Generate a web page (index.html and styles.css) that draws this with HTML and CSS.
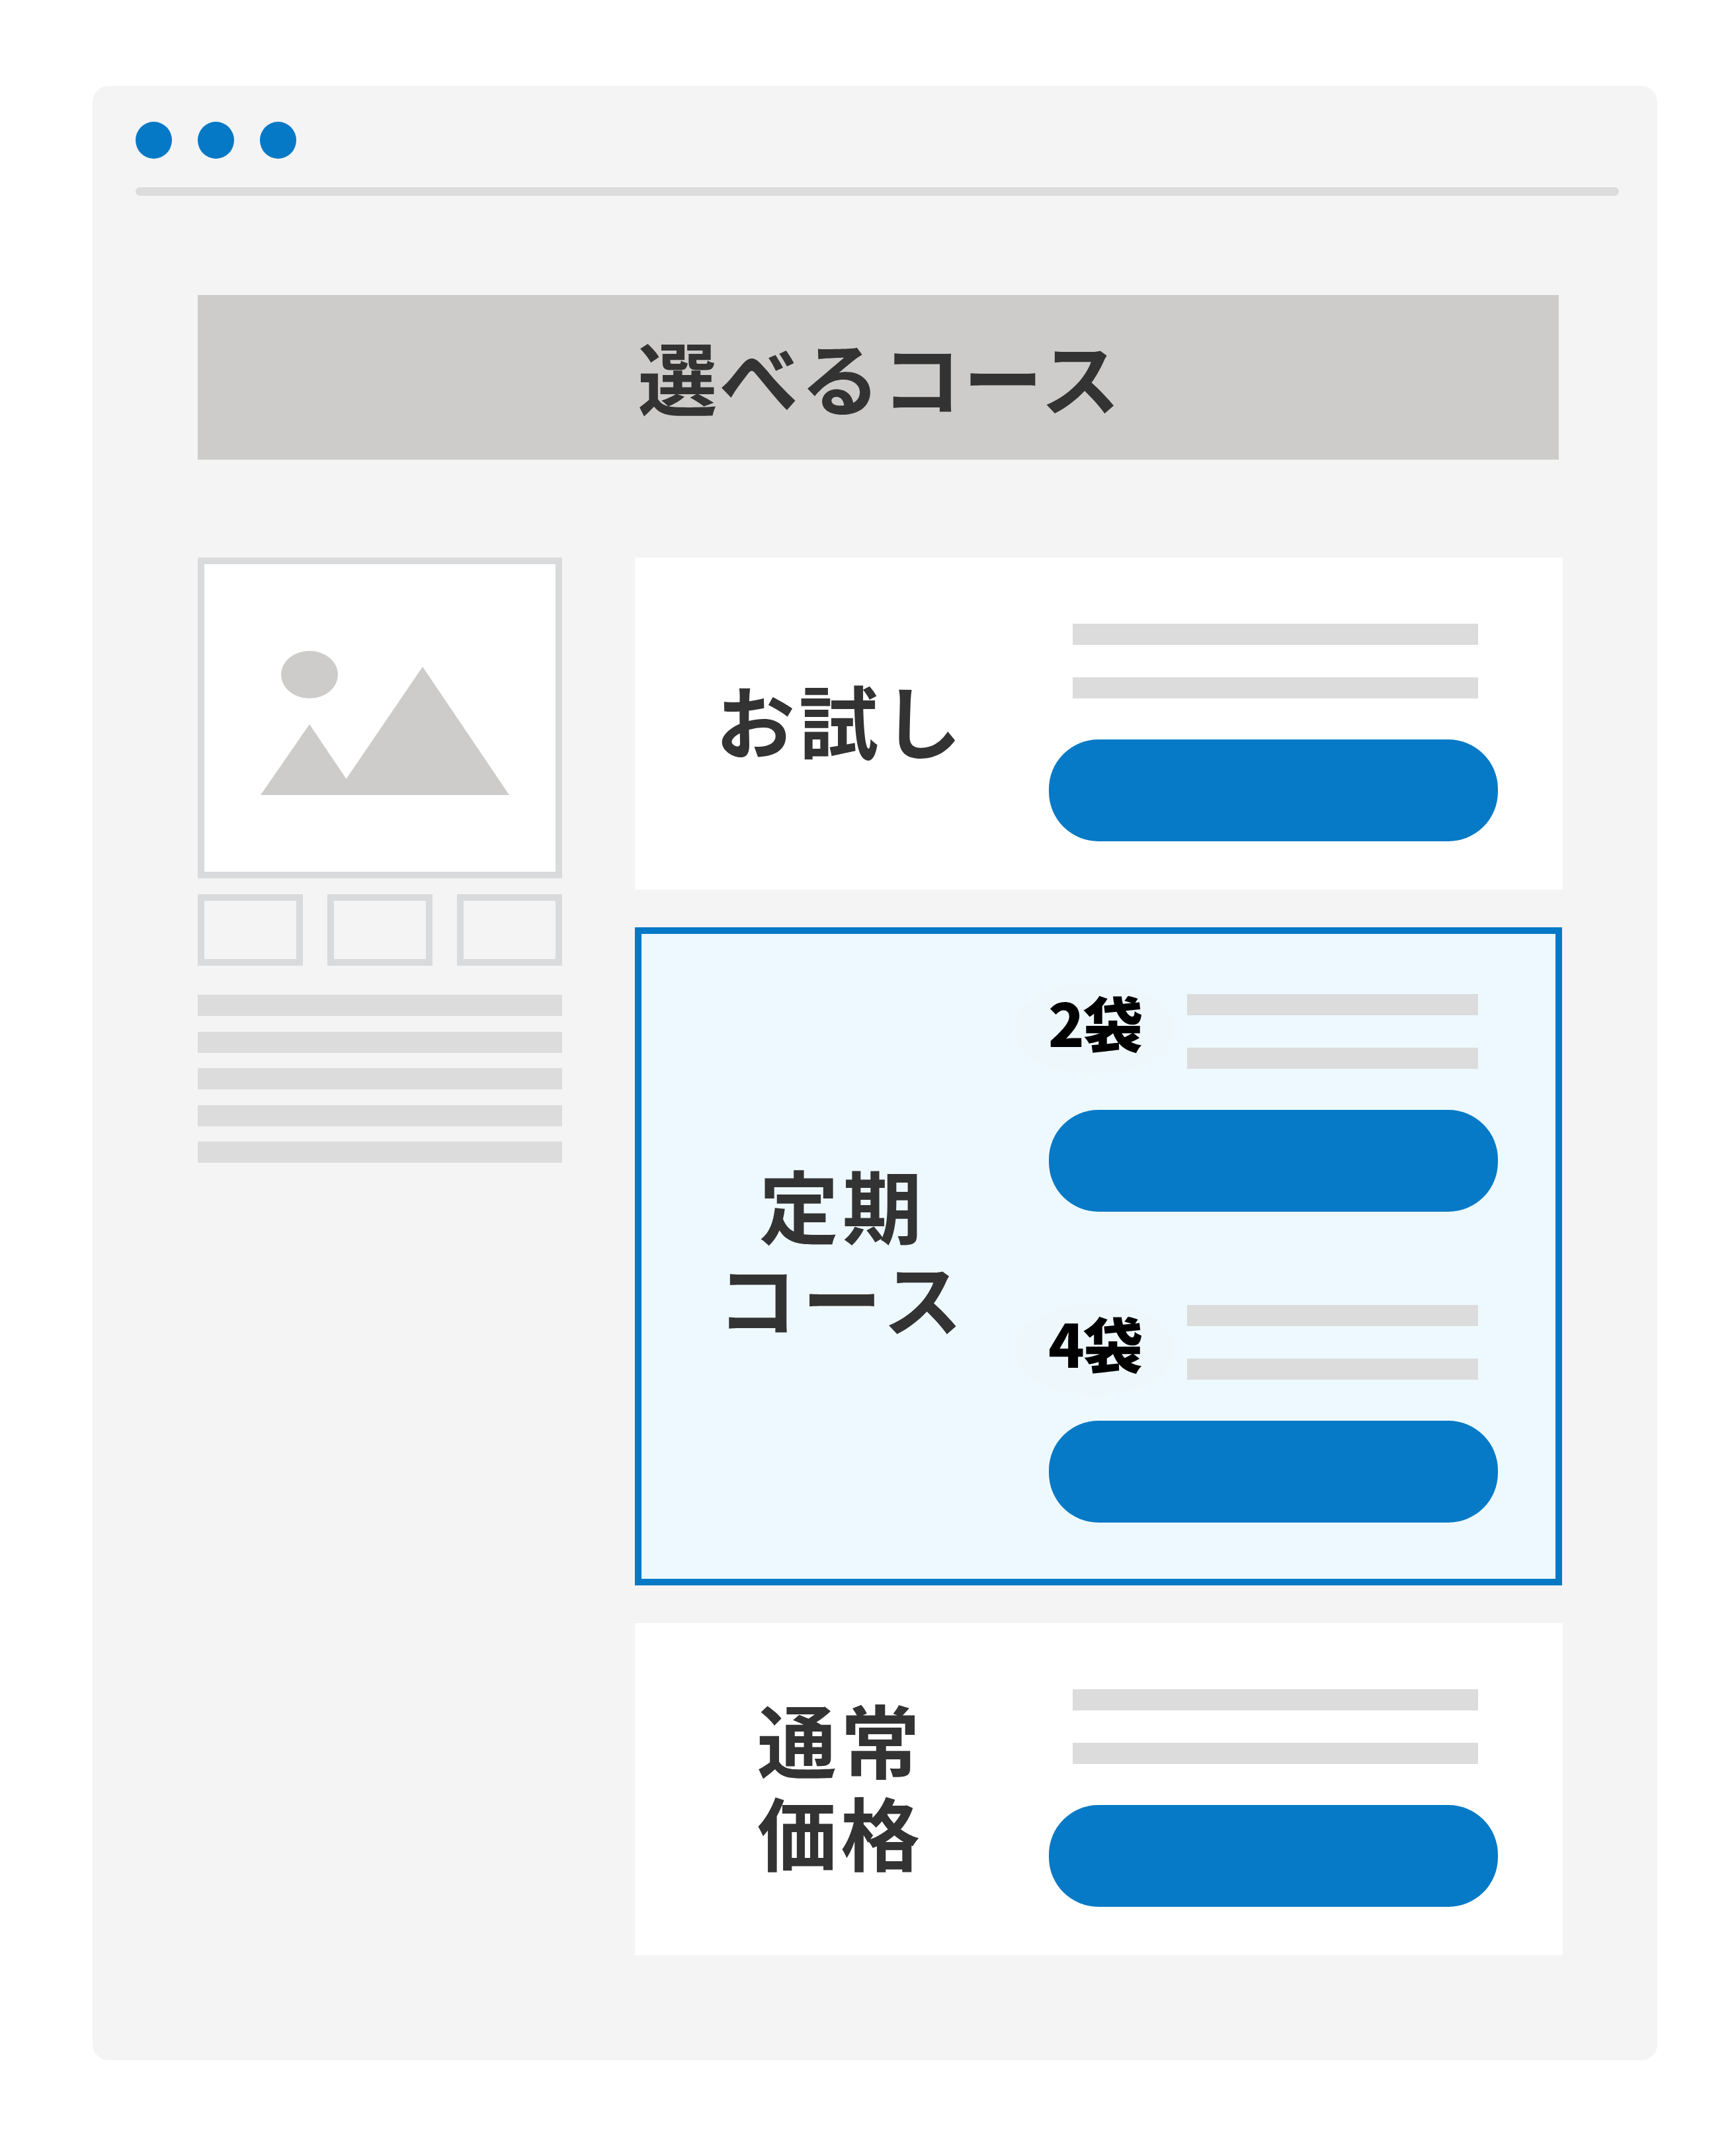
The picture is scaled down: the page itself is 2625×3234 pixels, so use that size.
FILE: index.html
```html
<!DOCTYPE html>
<html lang="ja">
<head>
  <meta charset="UTF-8">
  <title>選べるコース</title>
  <link rel="stylesheet" href="styles.css">
</head>
<body>
  <div class="window">
    <!-- Browser chrome -->
    <div class="dots">
      <span class="dot"></span>
      <span class="dot"></span>
      <span class="dot"></span>
    </div>
    <div class="address-bar"></div>

    <div class="content">
      <h1 class="title">選べるコース</h1>

      <div class="columns">
        <!-- Product gallery -->
        <div class="product">
          <div class="photo">
            <svg class="photo-icon" viewBox="0 0 531 465">
              <ellipse cx="159" cy="167" rx="43" ry="36" />
              <polygon points="85,349 159,242 231,349" />
              <polygon points="198,349 330,155 461,349" />
            </svg>
          </div>
          <div class="thumbs">
            <div class="thumb"></div>
            <div class="thumb"></div>
            <div class="thumb"></div>
          </div>
          <div class="desc">
            <div class="desc-line"></div>
            <div class="desc-line"></div>
            <div class="desc-line"></div>
            <div class="desc-line"></div>
            <div class="desc-line"></div>
          </div>
        </div>

        <!-- Course cards -->
        <div class="courses">
          <div class="card">
            <p class="card-label">お試し</p>
            <div class="card-body">
              <div class="lines">
                <div class="line"></div>
                <div class="line"></div>
              </div>
              <div class="cta"></div>
            </div>
          </div>

          <div class="card card-active">
            <p class="card-label">定期<br><span class="kana">コース</span></p>
            <div class="card-body">
              <div class="plan">
                <span class="badge">2袋</span>
                <div class="lines lines-short">
                  <div class="line"></div>
                  <div class="line"></div>
                </div>
                <div class="cta"></div>
              </div>
              <div class="plan">
                <span class="badge">4袋</span>
                <div class="lines lines-short">
                  <div class="line"></div>
                  <div class="line"></div>
                </div>
                <div class="cta"></div>
              </div>
            </div>
          </div>

          <div class="card">
            <p class="card-label">通常<br>価格</p>
            <div class="card-body">
              <div class="lines">
                <div class="line"></div>
                <div class="line"></div>
              </div>
              <div class="cta"></div>
            </div>
          </div>
        </div>
      </div>
    </div>
  </div>
</body>
</html>
```

FILE: styles.css
```css
/* General page styles */
body {
  margin: 0;
  padding: 130px 119px 119px 140px;
  background-color: #fff;
  font-family: "Noto Sans CJK JP", "Noto Sans", sans-serif;
  color: #333;
}

.window {
  box-sizing: border-box;
  width: 2366px;
  height: 2985px;
  padding: 54px 58px 0 65px;
  background-color: #f4f4f4;
  border-radius: 24px;
}

/* Browser chrome */
.dots {
  display: flex;
  gap: 39px;
}

.dot {
  width: 55px;
  height: 56px;
  border-radius: 50%;
  background-color: #0579c6;
}

.address-bar {
  height: 13px;
  margin-top: 43px;
  border-radius: 7px;
  background-color: #dcdcdc;
}

.content {
  margin: 150px 0 0 94px;
}

.title {
  box-sizing: border-box;
  width: 2058px;
  height: 249px;
  margin: 0;
  padding-left: 5px;
  background-color: #cdccca;
  font-size: 120px;
  font-weight: 700;
  line-height: 244px;
  letter-spacing: 3px;
  text-align: center;
}

.columns {
  display: flex;
  gap: 110px;
  margin-top: 148px;
}

/* Product gallery */
.product {
  width: 551px;
}

.photo {
  box-sizing: border-box;
  height: 485px;
  border: 10px solid #d9dadc;
  background-color: #fff;
}

.photo-icon {
  display: block;
  width: 100%;
  height: 100%;
  fill: #cdccca;
}

.thumbs {
  display: flex;
  justify-content: space-between;
  margin-top: 24px;
}

.thumb {
  box-sizing: border-box;
  width: 159px;
  height: 108px;
  border: 10px solid #d9dadc;
}

.desc {
  display: flex;
  flex-direction: column;
  gap: 23.6px;
  margin-top: 44px;
}

.desc-line {
  height: 32px;
  background-color: #dcdcdc;
}

/* Course cards */
.courses {
  display: flex;
  flex-direction: column;
  gap: 57px;
  width: 1403px;
}

.card {
  box-sizing: border-box;
  display: flex;
  align-items: center;
  height: 502px;
  background-color: #fff;
}

.card-active {
  width: 1402px;
  height: 995px;
  border: 10px solid #0579c6;
  background-color: #eef9ff;
}

.card-label {
  box-sizing: border-box;
  width: 618px;
  margin: 0 0 14px;
  padding-left: 4px;
  font-size: 120px;
  font-weight: 700;
  line-height: 140px;
  letter-spacing: 6px;
  text-align: center;
}

.card-active .card-label {
  width: 608px;
  margin-bottom: 20px;
  padding-left: 0;
}

.kana {
  letter-spacing: 8px;
}

.card-body {
  align-self: flex-start;
  width: 679px;
  margin-left: 8px;
  padding-top: 100px;
}

.card-active .card-body {
  padding-top: 91px;
}

.lines {
  display: flex;
  flex-direction: column;
  gap: 49px;
  padding: 0 30px 0 36px;
}

.lines-short {
  padding-left: 209px;
}

.line {
  height: 32px;
  background-color: #dcdcdc;
}

.cta {
  height: 154px;
  margin-top: 62px;
  border-radius: 75px;
  background-color: #067ac6;
}

/* Bag count badge, sits over the corner of a plan */
.plan {
  position: relative;
}

.plan + .plan {
  margin-top: 141px;
}

.badge {
  position: absolute;
  top: -17px;
  left: -50px;
  width: 239px;
  height: 138px;
  border-radius: 50%;
  background-color: #eef7fc;
  color: #000;
  font-size: 90px;
  font-weight: 900;
  line-height: 116px;
  letter-spacing: -2px;
  text-align: center;
}

.plan + .plan .badge {
  top: -2px;
}
```
